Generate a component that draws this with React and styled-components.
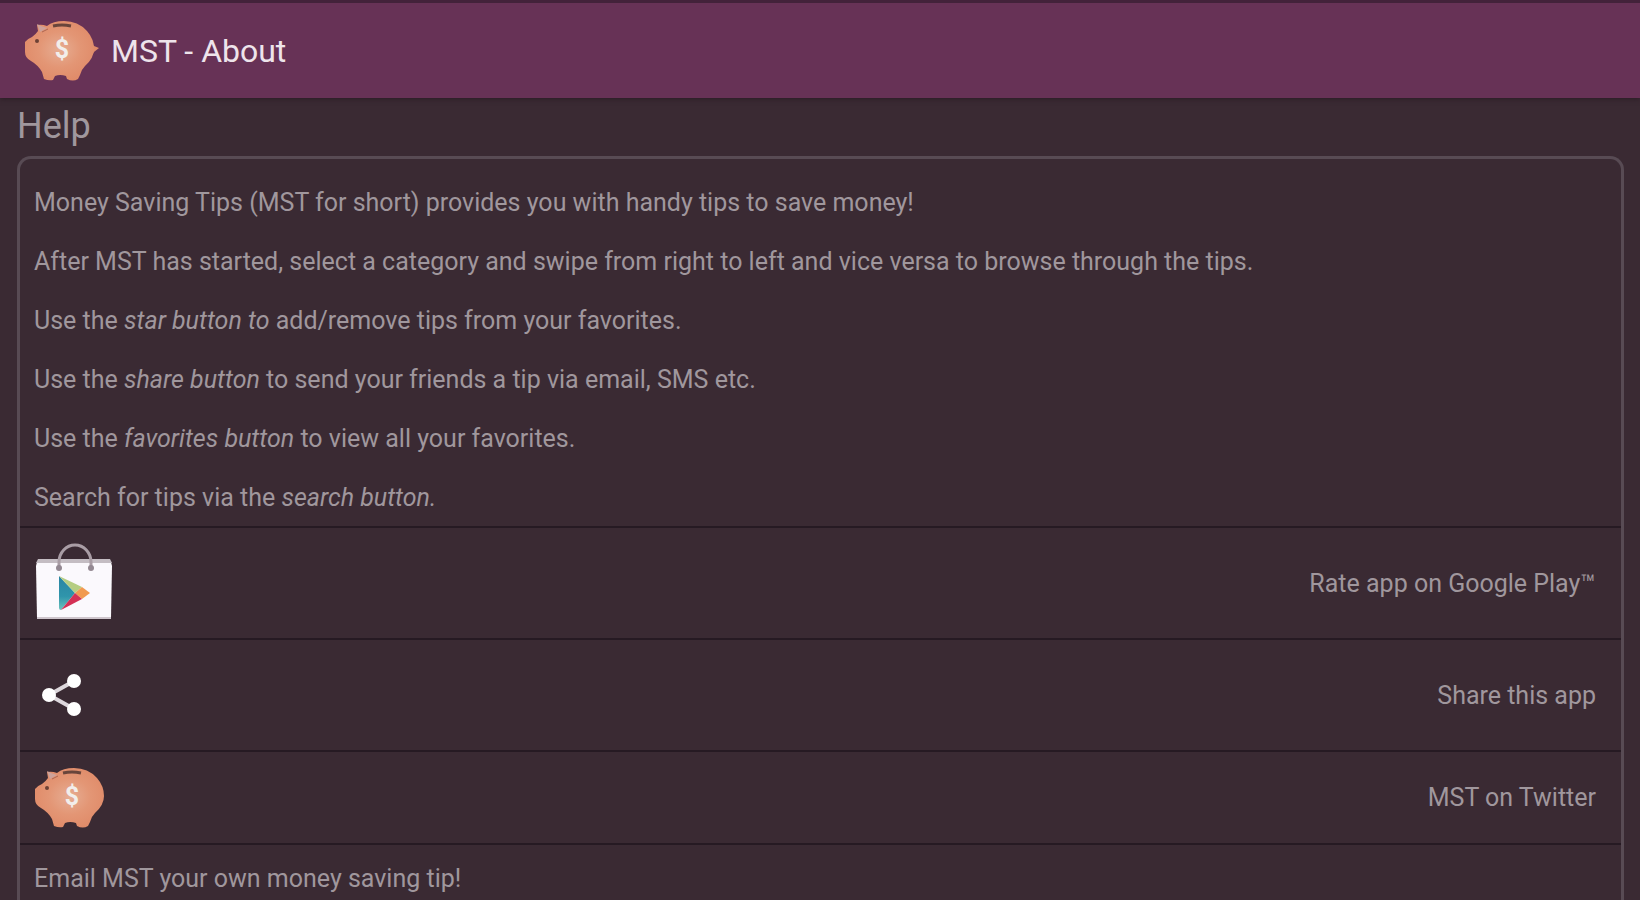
import styled, { createGlobalStyle } from 'styled-components'

const COLORS = {
    background: '#3a2a33',
    header: '#673256',
    headerEdge: '#43223a',
    border: '#584b54',
    divider: '#261a23',
    title: '#eee4eb',
    text: '#a0979d',
}

const GlobalStyle = createGlobalStyle`
    * {
        box-sizing: border-box;
    }
    body {
        margin: 0;
        background: ${COLORS.background};
        color: ${COLORS.text};
        font-family: Roboto, "Liberation Sans", sans-serif;
        font-size: 25px;
        line-height: 29px;
    }
`

const Page = styled.div`
    height: 100vh;
    overflow: hidden;
`

const Header = styled.header`
    display: flex;
    align-items: center;
    gap: 12px;
    height: 98px;
    padding: 0 24px;
    border-top: 3px solid ${COLORS.headerEdge};
    background: ${COLORS.header};
    box-shadow: 0 1px 5px #2a1c25;
`

const Title = styled.h1`
    margin: 0;
    color: ${COLORS.title};
    font-size: 32px;
    font-weight: 400;
    line-height: 36px;
`

const Content = styled.main`
    padding: 8px 16px 0;
`

const SectionTitle = styled.h2`
    margin: 0 0 10px 1px;
    font-size: 36px;
    font-weight: 400;
    line-height: 40px;
`

const Card = styled.section`
    margin-left: 1px;
    border: 3px solid ${COLORS.border};
    border-bottom: 0;
    border-radius: 14px 14px 0 0;
`

const HelpText = styled.div`
    display: flex;
    flex-direction: column;
    gap: 30px;
    padding: 29px 14px 14px;
    p {
        margin: 0;
    }
`

const Row = styled.a`
    display: flex;
    align-items: center;
    justify-content: ${({ $plain }) => ($plain ? 'flex-start' : 'space-between')};
    height: ${({ $height }) => $height}px;
    padding: 0 25px 0 14px;
    border-top: 2px solid ${COLORS.divider};
    color: inherit;
    text-decoration: none;
`

const Icon = styled.svg`
    display: block;
    flex: none;
`

const Piggy = ({ id, width, tail }) => (
    <Icon width={width} height='62' viewBox={`0 0 ${width} 62`} aria-hidden='true'>
        <defs>
            <radialGradient id={id} cx='50%' cy='48%' r='55%'>
                <stop offset='0' stopColor='#e6ad93' />
                <stop offset='0.55' stopColor='#e39675' />
                <stop offset='1' stopColor='#e08b69' />
            </radialGradient>
        </defs>
        {tail && <path d='M65 21 Q68 22 70 26 L75 28 L70 32 Q69 35 65 37Z' fill='#e08b69' />}
        <path
            d='M1 22 Q3 19 8 17 Q12 14 14 11 L13 5 Q18 4 23 6 Q29 1 40 1 Q54 1 63 11 Q70 19 70 29 Q70 38 61 46 Q57 50 56 55 L54 59 Q49 62 43 59 L42 56 Q36 54 31 56 L29 60 Q25 61 20 59 L18 52 Q14 45 7 41 Q1 38 1 32Z'
            fill={`url(#${id})`}
        />
        <path d='M13 4 L17 6 L23 8 L16 12Z' fill='#cda29a' />
        <path d='M24 9 L18 12' stroke='#ad6652' strokeWidth='1' />
        <path d='M29 6 Q38 4 47 6' fill='none' stroke='#69453b' strokeWidth='3' />
        <ellipse cx='13' cy='21' rx='2' ry='2' fill='#6d4135' />
        <text
            x='38'
            y='38'
            textAnchor='middle'
            fontFamily='Roboto, sans-serif'
            fontSize='25'
            fontWeight='700'
            fill='#f2eeeb'
        >
            $
        </text>
    </Icon>
)

const PlayBag = () => (
    <Icon width='80' height='80' viewBox='0 0 80 80' aria-hidden='true'>
        <defs>
            <linearGradient id='play-side' x1='0' y1='0' x2='0' y2='1'>
                <stop offset='0' stopColor='#2a84a3' />
                <stop offset='0.6' stopColor='#2f95ab' />
                <stop offset='1' stopColor='#6fc3bd' />
            </linearGradient>
        </defs>
        <path d='M3 19 L77 19 L78 23 L77 75 L3 75 L2 23Z' fill='#fbf9fd' />
        <path d='M4 16 H76 L78 20 H2Z' fill='#c4bdc3' />
        <path d='M3 75 H77' stroke='#cfc6cd' strokeWidth='2' />
        <path d='M25 25 V19 A16 17 0 0 1 57 19 V25' fill='none' stroke='#a99da5' strokeWidth='3' />
        <circle cx='25' cy='25' r='3' fill='#938892' />
        <circle cx='57' cy='25' r='3' fill='#938892' />
        <path d='M25 33 L41 50 L27 67 Q25 67 25 65Z' fill='url(#play-side)' />
        <path d='M25 33 L48 44 L41 50Z' fill='#b6ce83' />
        <path d='M48 44 L56 50 L48 56 L41 50Z' fill='#f19a50' />
        <path d='M41 50 L48 56 L27 67Z' fill='#d43055' />
    </Icon>
)

const ShareIcon = () => (
    <Icon width='54' height='48' viewBox='0 0 54 48' aria-hidden='true'>
        <path d='M40 10 L15 24 L40 38' fill='none' stroke='#ddd7dc' strokeWidth='4' />
        <circle cx='40' cy='10' r='7' fill='#fff' />
        <circle cx='15' cy='24' r='7' fill='#fff' />
        <circle cx='40' cy='38' r='7' fill='#fff' />
    </Icon>
)

export default function App() {
    return (
        <Page>
            <GlobalStyle />
            <Header>
                <Piggy id='pig-header' width={75} tail />
                <Title>MST - About</Title>
            </Header>
            <Content>
                <SectionTitle>Help</SectionTitle>
                <Card>
                    <HelpText>
                        <p>Money Saving Tips (MST for short) provides you with handy tips to save money!</p>
                        <p>After MST has started, select a category and swipe from right to left and vice versa to browse through the tips.</p>
                        <p>Use the <em>star button to</em> add/remove tips from your favorites.</p>
                        <p>Use the <em>share button</em> to send your friends a tip via email, SMS etc.</p>
                        <p>Use the <em>favorites button</em> to view all your favorites.</p>
                        <p>Search for tips via the <em>search button.</em></p>
                    </HelpText>
                    <Row href='#rate' $height={112}>
                        <PlayBag />
                        <span>Rate app on Google Play™</span>
                    </Row>
                    <Row href='#share' $height={112}>
                        <ShareIcon />
                        <span>Share this app</span>
                    </Row>
                    <Row href='#twitter' $height={93}>
                        <Piggy id='pig-twitter' width={71} />
                        <span>MST on Twitter</span>
                    </Row>
                    <Row href='#email' $height={69} $plain>
                        <span>Email MST your own money saving tip!</span>
                    </Row>
                </Card>
            </Content>
        </Page>
    )
}
